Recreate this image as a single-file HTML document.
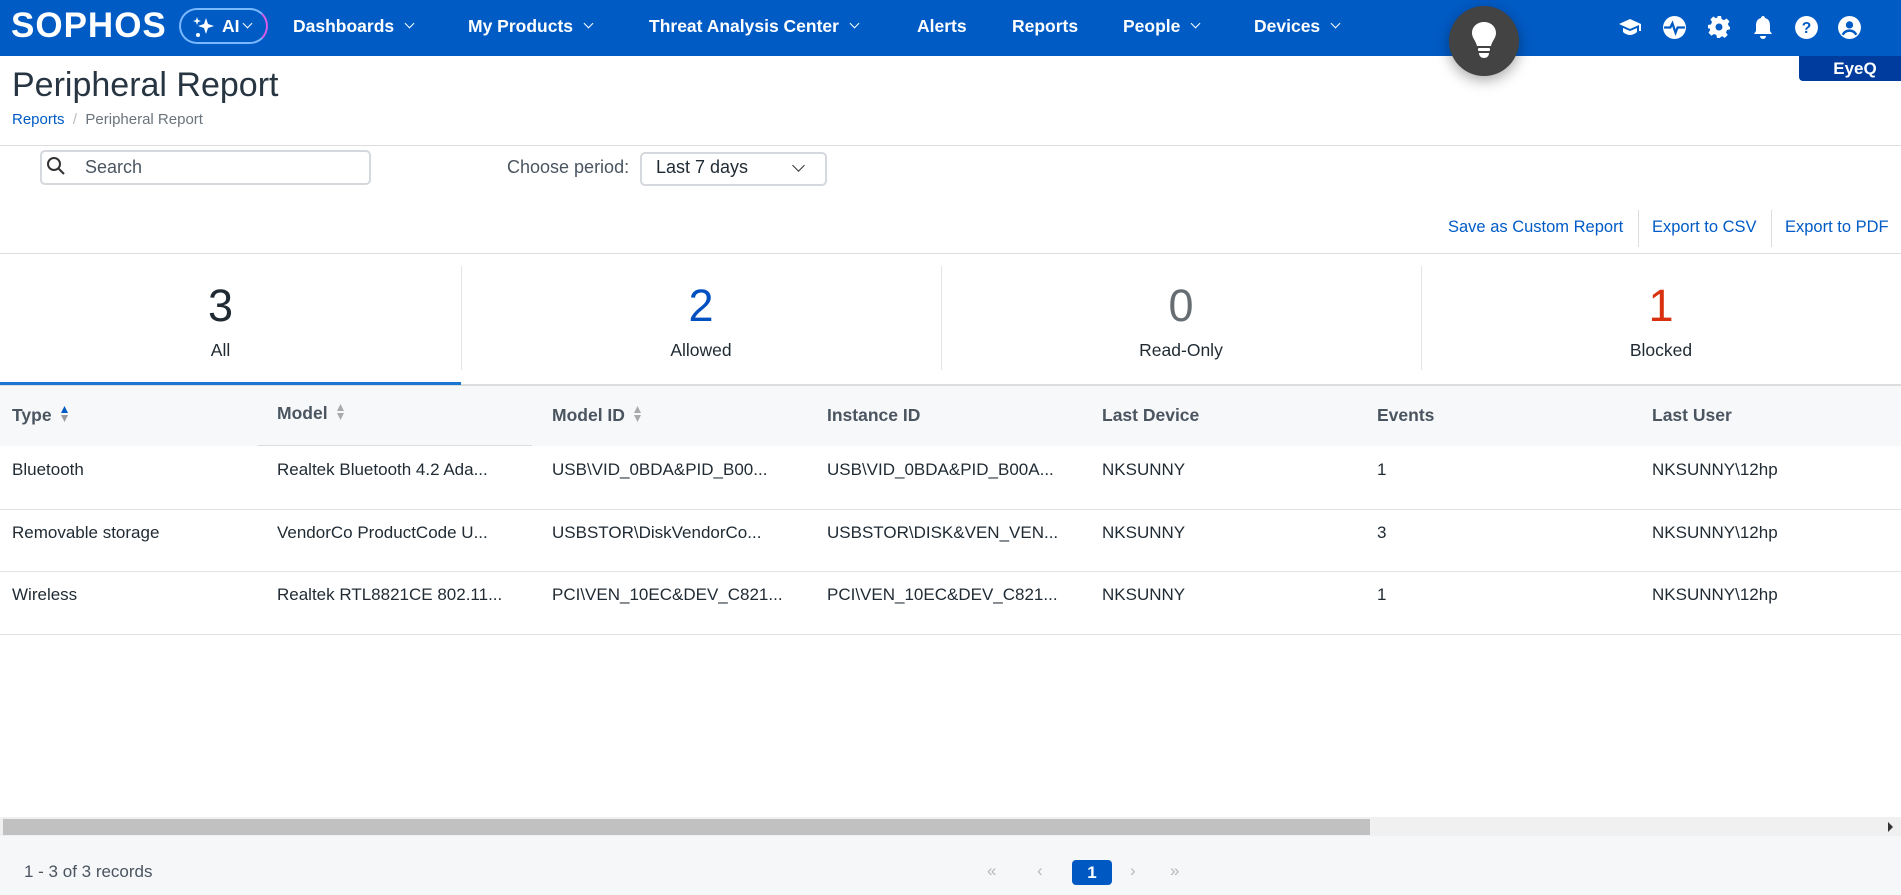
<!DOCTYPE html>
<html><head><meta charset="utf-8"><style>
*{box-sizing:border-box;margin:0;padding:0}
body{width:1901px;height:895px;overflow:hidden;font-family:"Liberation Sans",Arial,sans-serif;background:#fff;color:#1f2a33;position:relative}
.a{position:absolute;white-space:nowrap}
.nav{position:absolute;left:0;top:0;width:1901px;height:56px;background:#005bc5}
.ni{position:absolute;top:16px;color:#fff;font-weight:bold;font-size:17.5px}
.ni .c{display:inline-block;width:7px;height:7px;border-right:1.6px solid #fff;border-bottom:1.6px solid #fff;transform:rotate(45deg);margin-left:12px;position:relative;top:-5px}
.ic{position:absolute;top:15px}
.hd{font-weight:bold;font-size:17.5px;color:#4a5560;top:405px}
.cell{font-size:17px;color:#1f2a33}
.sort{display:inline-block;margin-left:8px;vertical-align:middle;position:relative;top:-2px}
</style></head><body>
<div class="nav"></div>
<div class="a" style="left:11px;top:6px;color:#fff;font-weight:bold;font-size:35px;letter-spacing:1px">SOPHOS</div>
<div class="a" style="left:179px;top:8px;width:89px;height:36px;border-radius:18px;border:2px solid #7ab8ff;border-right-color:#d85ce6"></div>
<svg class="a" style="left:192px;top:15px" width="24" height="24" viewBox="0 0 24 24" fill="#fff"><path d="M14 3l2 6 6 2-6 2-2 6-2-6-6-2 6-2z"/><path d="M5 2l1 3 3 1-3 1-1 3-1-3-3-1 3-1z"/><circle cx="6" cy="20" r="2"/></svg>
<div class="ni" style="left:222px">AI</div>
<div class="a" style="left:244px;top:20px;width:7px;height:7px;border-right:1.6px solid #fff;border-bottom:1.6px solid #fff;transform:rotate(45deg)"></div>
<div class="ni" style="left:293px">Dashboards<span class="c"></span></div>
<div class="ni" style="left:468px">My Products<span class="c"></span></div>
<div class="ni" style="left:649px">Threat Analysis Center<span class="c"></span></div>
<div class="ni" style="left:917px">Alerts</div>
<div class="ni" style="left:1012px">Reports</div>
<div class="ni" style="left:1123px">People<span class="c"></span></div>
<div class="ni" style="left:1254px">Devices<span class="c"></span></div>
<div class="a" style="left:1449px;top:6px;width:70px;height:70px;border-radius:50%;background:#434343;box-shadow:0 4px 14px rgba(0,0,0,.35)"></div>
<svg class="a" style="left:1470px;top:20px" width="28" height="40" viewBox="0 0 28 40" fill="#fff"><path d="M14 2C7 2 2 7 2 13c0 5 4 8 5 13h14c1-5 5-8 5-13C26 7 21 2 14 2z"/><rect x="8" y="28" width="12" height="3" rx="1"/><path d="M9 33h10c0 3-2 5-5 5s-5-2-5-5z"/></svg>
<svg class="ic" style="left:1618px" width="24" height="24" viewBox="0 0 24 24" fill="#fff"><path d="M12 4L1 9l11 5 9-4v6h2V9z"/><path d="M5 13v4c2 2 5 3 7 3s5-1 7-3v-4l-7 3z"/></svg>
<svg class="ic" style="left:1662px" width="25" height="25" viewBox="0 0 24 24"><circle cx="12" cy="12" r="11" fill="#fff"/><path d="M2 12h6l2-4 3 9 2-5h7" stroke="#005bc5" stroke-width="2.2" fill="none"/></svg>
<svg class="ic" style="left:1707px" width="24" height="24" viewBox="0 0 24 24" fill="#fff"><path d="M10 1h4l.6 3 2.4 1.2 2.6-1.7 2.9 2.9-1.7 2.6L22 11.4l1 .6v0 0-.6 3l-3 .6-1 2.4 1.7 2.6-2.9 2.9-2.6-1.7-2.4 1L14 23h-4l-.6-3L7 19l-2.6 1.7-2.9-2.9L3.2 15 2 12.6 1 14v-4l3-.6L5 7 3.4 4.4l2.9-2.9L8.9 3.2 11 2z"/><circle cx="12" cy="12" r="3.5" fill="#005bc5"/></svg>
<svg class="ic" style="left:1752px" width="22" height="24" viewBox="0 0 22 24" fill="#fff"><path d="M11 1c1 0 2 1 2 2 4 1 5 4 5 8v5l2 3H2l2-3v-5c0-4 1-7 5-8 0-1 1-2 2-2z"/><path d="M8 21h6a3 3 0 01-6 0z"/></svg>
<svg class="ic" style="left:1794px" width="25" height="25" viewBox="0 0 24 24"><circle cx="12" cy="12" r="11" fill="#fff"/><text x="12" y="17.5" text-anchor="middle" font-family="Liberation Sans" font-weight="bold" font-size="15" fill="#005bc5">?</text></svg>
<svg class="ic" style="left:1837px" width="25" height="25" viewBox="0 0 24 24"><circle cx="12" cy="12" r="11" fill="#fff"/><circle cx="12" cy="9.5" r="3.5" fill="#005bc5"/><path d="M5.5 19c1.5-3 4-4 6.5-4s5 1 6.5 4" stroke="#005bc5" stroke-width="2.4" fill="none"/></svg>
<div class="a" style="left:1799px;top:56px;width:102px;height:25px;background:#003c9e;border-radius:0 0 0 4px;color:#fff;font-weight:bold;font-size:17px;text-align:center;line-height:25px;padding-left:10px">EyeQ</div>

<div class="a" style="left:12px;top:66px;font-size:34px;color:#273542">Peripheral Report</div>
<div class="a" style="left:12px;top:111px;font-size:15px;color:#005bc5">Reports <span style="color:#bbb">&nbsp;/&nbsp;</span> <span style="color:#6b747c">Peripheral Report</span></div>
<div class="a" style="left:0;top:145px;width:1901px;height:1px;background:#ddd"></div>

<div class="a" style="left:40px;top:150px;width:331px;height:35px;border:2px solid #d5d8dc;border-radius:5px"></div>
<svg class="a" style="left:46px;top:156px" width="20" height="20" viewBox="0 0 20 20"><circle cx="8" cy="8" r="6" stroke="#333" stroke-width="2" fill="none"/><path d="M12.5 12.5L18 18" stroke="#333" stroke-width="2"/></svg>
<div class="a" style="left:85px;top:157px;font-size:18px;color:#4a5560">Search</div>
<div class="a" style="left:507px;top:157px;font-size:18px;color:#4a5560">Choose period:</div>
<div class="a" style="left:640px;top:152px;width:187px;height:34px;border:2px solid #d5d8dc;border-radius:5px"></div>
<div class="a" style="left:656px;top:157px;font-size:18px;color:#1f2a33">Last 7 days</div>
<div class="a" style="left:794px;top:161px;width:9px;height:9px;border-right:1.6px solid #333;border-bottom:1.6px solid #333;transform:rotate(45deg)"></div>

<div class="a" style="left:1448px;top:218px;font-size:16.5px;color:#005bc5">Save as Custom Report</div>
<div class="a" style="left:1638px;top:210px;width:1px;height:37px;background:#ddd"></div>
<div class="a" style="left:1652px;top:218px;font-size:16.5px;color:#005bc5">Export to CSV</div>
<div class="a" style="left:1771px;top:210px;width:1px;height:37px;background:#ddd"></div>
<div class="a" style="left:1785px;top:218px;font-size:16.5px;color:#005bc5">Export to PDF</div>
<div class="a" style="left:0;top:253px;width:1901px;height:1px;background:#ddd"></div>

<div class="a" style="left:461px;top:266px;width:1px;height:104px;background:#e4e4e4"></div>
<div class="a" style="left:941px;top:266px;width:1px;height:104px;background:#e4e4e4"></div>
<div class="a" style="left:1421px;top:266px;width:1px;height:104px;background:#e4e4e4"></div>
<div class="a" style="left:0;top:280px;width:441px;text-align:center;font-size:45px;color:#1f2a33">3</div>
<div class="a" style="left:461px;top:280px;width:480px;text-align:center;font-size:45px;color:#0050c0">2</div>
<div class="a" style="left:941px;top:280px;width:480px;text-align:center;font-size:45px;color:#666e73">0</div>
<div class="a" style="left:1421px;top:280px;width:480px;text-align:center;font-size:45px;color:#d9300f">1</div>
<div class="a" style="left:0;top:340px;width:441px;text-align:center;font-size:17.5px">All</div>
<div class="a" style="left:461px;top:340px;width:480px;text-align:center;font-size:17.5px">Allowed</div>
<div class="a" style="left:941px;top:340px;width:480px;text-align:center;font-size:17.5px">Read-Only</div>
<div class="a" style="left:1421px;top:340px;width:480px;text-align:center;font-size:17.5px">Blocked</div>
<div class="a" style="left:0;top:384px;width:1901px;height:2px;background:#ddd"></div>
<div class="a" style="left:0;top:382px;width:461px;height:3px;background:#1976d2"></div>

<div class="a" style="left:0;top:386px;width:1901px;height:60px;background:#f7f8fa"></div>
<div class="a" style="left:258px;top:445px;width:274px;height:1px;background:#ddd"></div>
<div class="a hd" style="left:12px">Type<svg class="sort" width="9" height="18" viewBox="0 0 9 18"><path d="M4.5 1L8 8H1z" fill="#005bc5"/><path d="M4.5 17L8 10H1z" fill="#999"/></svg></div>
<div class="a hd" style="left:277px;top:403px">Model<svg class="sort" width="9" height="18" viewBox="0 0 9 18"><path d="M4.5 1L8 8H1z" fill="#aaa"/><path d="M4.5 17L8 10H1z" fill="#aaa"/></svg></div>
<div class="a hd" style="left:552px">Model ID<svg class="sort" width="9" height="18" viewBox="0 0 9 18"><path d="M4.5 1L8 8H1z" fill="#aaa"/><path d="M4.5 17L8 10H1z" fill="#aaa"/></svg></div>
<div class="a hd" style="left:827px">Instance ID</div>
<div class="a hd" style="left:1102px">Last Device</div>
<div class="a hd" style="left:1377px">Events</div>
<div class="a hd" style="left:1652px">Last User</div>

<div class="a" style="left:0;top:509px;width:1901px;height:1px;background:#e2e2e2"></div>
<div class="a" style="left:0;top:571px;width:1901px;height:1px;background:#e2e2e2"></div>
<div class="a" style="left:0;top:634px;width:1901px;height:1px;background:#e2e2e2"></div>

<div class="a cell" style="left:12px;top:460px">Bluetooth</div>
<div class="a cell" style="left:277px;top:460px">Realtek Bluetooth 4.2 Ada...</div>
<div class="a cell" style="left:552px;top:460px">USB\VID_0BDA&amp;PID_B00...</div>
<div class="a cell" style="left:827px;top:460px">USB\VID_0BDA&amp;PID_B00A...</div>
<div class="a cell" style="left:1102px;top:460px">NKSUNNY</div>
<div class="a cell" style="left:1377px;top:460px">1</div>
<div class="a cell" style="left:1652px;top:460px">NKSUNNY\12hp</div>

<div class="a cell" style="left:12px;top:523px">Removable storage</div>
<div class="a cell" style="left:277px;top:523px">VendorCo ProductCode U...</div>
<div class="a cell" style="left:552px;top:523px">USBSTOR\DiskVendorCo...</div>
<div class="a cell" style="left:827px;top:523px">USBSTOR\DISK&amp;VEN_VEN...</div>
<div class="a cell" style="left:1102px;top:523px">NKSUNNY</div>
<div class="a cell" style="left:1377px;top:523px">3</div>
<div class="a cell" style="left:1652px;top:523px">NKSUNNY\12hp</div>

<div class="a cell" style="left:12px;top:585px">Wireless</div>
<div class="a cell" style="left:277px;top:585px">Realtek RTL8821CE 802.11...</div>
<div class="a cell" style="left:552px;top:585px">PCI\VEN_10EC&amp;DEV_C821...</div>
<div class="a cell" style="left:827px;top:585px">PCI\VEN_10EC&amp;DEV_C821...</div>
<div class="a cell" style="left:1102px;top:585px">NKSUNNY</div>
<div class="a cell" style="left:1377px;top:585px">1</div>
<div class="a cell" style="left:1652px;top:585px">NKSUNNY\12hp</div>

<div class="a" style="left:0;top:817px;width:1901px;height:19px;background:#f0f0f0"></div>
<div class="a" style="left:3px;top:819px;width:1367px;height:16px;background:#c1c1c1"></div>
<div class="a" style="left:1888px;top:822px;width:0;height:0;border-left:5px solid #333;border-top:5px solid transparent;border-bottom:5px solid transparent"></div>
<div class="a" style="left:0;top:836px;width:1901px;height:59px;background:#f6f7f9"></div>
<div class="a" style="left:24px;top:862px;font-size:17px;color:#4a5560">1 - 3 of 3 records</div>
<div class="a" style="left:987px;top:861px;font-size:17px;color:#b5b9bd">«</div>
<div class="a" style="left:1037px;top:861px;font-size:17px;color:#b5b9bd">‹</div>
<div class="a" style="left:1072px;top:860px;width:40px;height:25px;background:#0059c3;border-radius:4px;color:#fff;font-size:17px;font-weight:bold;text-align:center;line-height:25px">1</div>
<div class="a" style="left:1130px;top:861px;font-size:17px;color:#b5b9bd">›</div>
<div class="a" style="left:1170px;top:861px;font-size:17px;color:#b5b9bd">»</div>
</body></html>
